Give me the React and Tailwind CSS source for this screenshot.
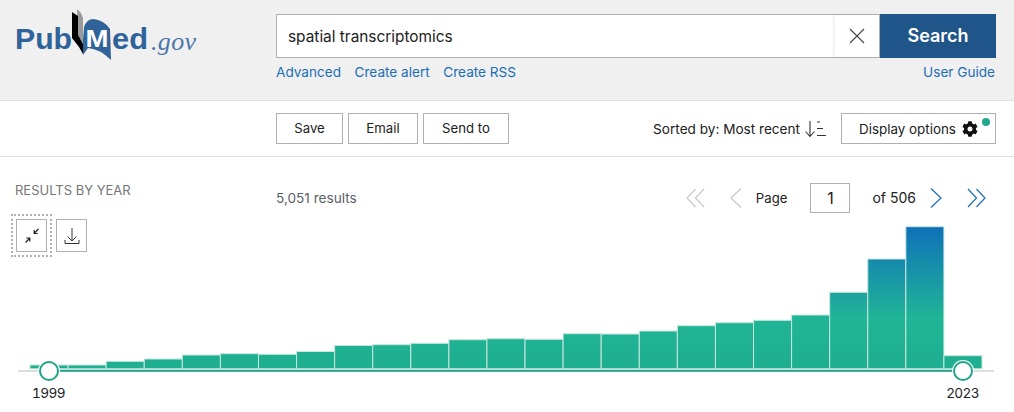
import { FaCog } from "react-icons/fa";

const fontStack = { fontFamily: "Inter, sans-serif" };

const outlineButton =
  "flex h-[31px] items-center justify-center border border-[#aeb0b5] bg-white pt-px text-[13.2px] text-[#212121]";

// tops of the year bars, 1999 to 2023
const barTops = [
  365, 365, 361.3, 359, 355, 353.7, 354.3, 351.5, 345.5, 344.7, 343.3, 339.7, 338.7,
  339.3, 333.7, 334, 331, 325.7, 322.7, 320.3, 315, 292.3, 259, 226.7, 355.7,
];

const Logo = () => (
  <svg width="200" height="70" viewBox="0 0 200 70" className="block">
    <text x="15" y="49" fontFamily="Liberation Sans" fontWeight="700" fontSize="30" fill="#2f6399" textLength="57" lengthAdjust="spacingAndGlyphs">
      Pub
    </text>
    <path d="M77 9 L81 13 L83 18 L83 44 L78 36 Z" fill="#9a9a9a" />
    <path d="M72 12 L78 16 L78 35 L83 44 L83 54 L79 47 L72 38 Z" fill="#000" />
    <path d="M84 27 Q87 19 93 19 Q104 20 110 29 L111 60 Q100 49 88 48 L83 55 L83 40 Z" fill="#2f6399" />
    <text x="85.5" y="47" fontFamily="Liberation Sans" fontWeight="700" fontSize="23" fill="#fff" textLength="23" lengthAdjust="spacingAndGlyphs">
      M
    </text>
    <text x="112" y="49" fontFamily="Liberation Sans" fontWeight="700" fontSize="30" fill="#2f6399" textLength="36" lengthAdjust="spacingAndGlyphs">
      ed
    </text>
    <text x="151" y="50" fontFamily="Liberation Serif" fontStyle="italic" fontSize="26" fill="#4a76a8" textLength="45">
      .gov
    </text>
  </svg>
);

const Chevron = ({ color, double, flip }) => (
  <svg width="20" height="22" viewBox="0 0 20 22" fill="none" stroke={color} strokeWidth="1.2">
    <g transform={flip ? "matrix(-1 0 0 1 20 0)" : undefined}>
      <path d={double ? "M9.5 2 L1 11 L9.5 20" : "M15 1.5 L5 11 L15 20.5"} />
      {double && <path d="M18 2 L9.5 11 L18 20" />}
    </g>
  </svg>
);

const SortIcon = () => (
  <svg width="22" height="18" viewBox="0 0 22 18" fill="none" stroke="#333" strokeWidth="1.1">
    <path d="M6 1 V16 M1.5 11.5 L6 16.5 L10.5 11.5" />
    <path d="M13 2 H16 M13 8.5 H19 M13 15.5 H22" />
  </svg>
);

const Chart = () => (
  <svg width="1014" height="168" viewBox="0 215 1014 168" className="block">
    <defs>
      <linearGradient id="barFill" gradientUnits="userSpaceOnUse" x1="0" y1="227" x2="0" y2="369">
        <stop offset="0" stopColor="#0f71b8" />
        <stop offset="0.64" stopColor="#20b596" />
        <stop offset="1" stopColor="#1eae90" />
      </linearGradient>
    </defs>
    {barTops.map((top, i) => (
      <rect
        key={i}
        x={30 + i * 38.08}
        y={top}
        width={38.08}
        height={368.8 - top}
        fill="url(#barFill)"
        stroke="#c9e6df"
        strokeWidth="1"
      />
    ))}
    <path d="M18 371 H994" stroke="#dedede" strokeWidth="2" />
    <path d="M49 370.7 H963" stroke="#1fa58a" strokeWidth="2" />
    <circle cx="49" cy="371" r="11" fill="#fff" />
    <circle cx="49" cy="371" r="9" fill="#fff" stroke="#1fa58a" strokeWidth="2" />
    <circle cx="963" cy="371" r="11" fill="#fff" />
    <circle cx="963" cy="371" r="9" fill="#fff" stroke="#1fa58a" strokeWidth="2" />
  </svg>
);

const App = () => {
  return (
    <div className="h-[412px] w-[1014px] overflow-hidden bg-white" style={fontStack}>
      <header className="flex h-[101px] border-b border-[#e0e0e0] bg-[#f0f0f0]">
        <div className="w-[276px] shrink-0">
          <Logo />
        </div>
        <div className="w-[720px] pt-[14px]">
          <div className="flex h-[44px]">
            <div className="flex flex-1 items-center border border-[#aeb0b5] bg-white">
              <span className="flex-1 pl-[11px] pt-px text-[15.4px] text-[#212121]">spatial transcriptomics</span>
              <span className="flex h-full w-[44px] items-center justify-center shadow-[-2px_0_3px_rgba(0,0,0,0.06)]">
                <svg width="16" height="16" viewBox="0 0 16 16" stroke="#4a4a4a" strokeWidth="1.2">
                  <path d="M1 1 L15 15 M15 1 L1 15" />
                </svg>
              </span>
            </div>
            <button className="w-[116px] bg-[#20558a] text-lg font-semibold text-white">Search</button>
          </div>
          <div className="mt-[5px] flex justify-between text-[13.6px] leading-[18px] text-[#1a6fb5]">
            <div className="flex gap-[13.5px]">
              <span>Advanced</span>
              <span>Create alert</span>
              <span>Create RSS</span>
            </div>
            <span className="pr-px">User Guide</span>
          </div>
        </div>
      </header>

      <div className="flex h-[56px] items-center border-b border-[#e0e0e0] pl-[276px] pr-[18px]">
        <div className="flex gap-[5px]">
          <button className={`${outlineButton} w-[67px]`}>Save</button>
          <button className={`${outlineButton} w-[70px]`}>Email</button>
          <button className={`${outlineButton} w-[86px]`}>Send to</button>
        </div>
        <div className="ml-auto flex items-center pt-px text-[13.6px] text-[#212121]">
          <span>Sorted by: Most recent</span>
          <span className="ml-[4px]">
            <SortIcon />
          </span>
        </div>
        <button className={`${outlineButton} relative ml-[15px] w-[155px] justify-start pl-[17px] !text-[13.4px]`}>
          Display options
          <FaCog className="ml-[6px] text-[16px] text-[#111111]" />
          <span className="absolute right-[5px] top-[4px] h-2 w-2 rounded-full bg-[#20a78b]" />
        </button>
      </div>

      <div className="flex h-[58px] pl-[15px] pr-[28px]">
        <span className="w-[261px] pt-[25px] text-[13px] leading-4 text-[#767676]">RESULTS BY YEAR</span>
        <span className="pt-[32px] text-[13.6px] leading-[18px] text-[#5b616b]">5,051 results</span>
        <div className="ml-auto mt-[26px] flex h-[30px] items-center self-start text-sm text-[#212121]">
          <Chevron color="#c5c9cc" double />
          <span className="ml-[20px]"><Chevron color="#c5c9cc" /></span>
          <span className="ml-[10px] text-[13.2px]">Page</span>
          <span className="ml-[23px] flex h-[30px] w-[40px] items-center justify-center border border-[#aeb0b5] text-base">1</span>
          <span className="ml-[22px]">of 506</span>
          <span className="ml-[10px]"><Chevron color="#1a6fb5" flip /></span>
          <span className="ml-[20px]"><Chevron color="#1a6fb5" double flip /></span>
        </div>
      </div>

      <div className="relative">
        <Chart />
        <div className="absolute left-[16px] top-[4px] flex gap-[9px]">
          <button className="flex h-[33px] w-[31px] items-center justify-center border border-[#aeb0b5] bg-white outline-2 outline-offset-[3px] outline-dotted outline-[#aeb0b5]">
            <svg width="16" height="16" viewBox="0 0 16 16" fill="none" stroke="#212121" strokeWidth="1.2">
              <path d="M14.5 1 L10.5 5 M10.2 2 V5.5 H13.7" />
              <path d="M1.5 14.5 L5.5 10.5 M2.3 10 H5.8 V13.5" />
            </svg>
          </button>
          <button className="flex h-[33px] w-[31px] items-center justify-center border border-[#aeb0b5] bg-white">
            <svg width="16" height="18" viewBox="0 0 16 18" fill="none" stroke="#333" strokeWidth="1">
              <path d="M8 1 V14 M3.5 9.5 L8 14 L12.5 9.5 M1 13 V16.5 H15 V13" />
            </svg>
          </button>
        </div>
        <div className="mt-[2px] flex justify-between pl-[32px] pr-[35px] text-[13.6px] leading-4 tracking-[-0.6px] text-[#212121] tabular-nums">
          <span>1999</span>
          <span>2023</span>
        </div>
      </div>
    </div>
  );
};

export default App;
